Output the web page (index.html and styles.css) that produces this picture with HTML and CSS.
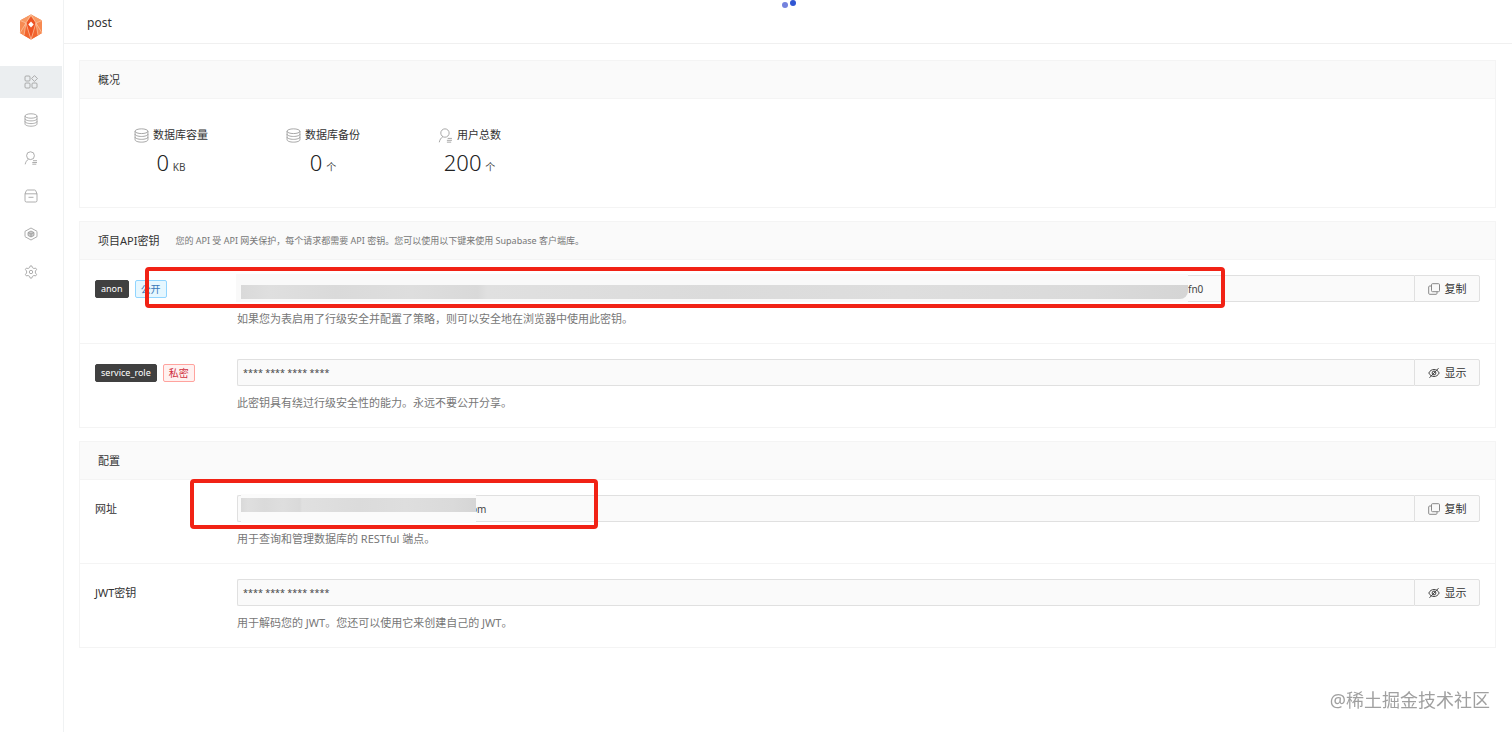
FILE: index.html
```html
<!DOCTYPE html>
<html lang="zh-CN">
<head>
  <meta charset="UTF-8"/>
  <meta name="viewport" content="width=device-width, initial-scale=1.0"/>
  <title>post</title>
  <link rel="stylesheet" href="styles.css">
</head>
<body>

  <!-- Shared icons -->
  <svg class="sprite" aria-hidden="true">
    <symbol id="icon-db" viewBox="0 0 14 14">
      <ellipse cx="7" cy="3" rx="6" ry="2.2"/>
      <path d="M1 3v8c0 1.2 2.700 2.200 6 2.200s6-1 6-2.200V3M1 5.700c0 1.200 2.700 2.200 6 2.200s6-1 6-2.200M1 8.400c0 1.200 2.700 2.200 6 2.200s6-1 6-2.200"/>
    </symbol>
    <symbol id="icon-user" viewBox="0 0 14 14">
      <circle cx="6.500" cy="4.700" r="3.900"/>
      <path d="M4.500 8.200C2.800 9.200 1.600 11 1.200 13.300M9 9.700h4M8.300 11.500h4.700M8.300 13.200h4"/>
    </symbol>
    <symbol id="icon-copy" viewBox="0 0 12 12">
      <rect x="3.500" y="0.700" width="8" height="8" rx="1"/>
      <path d="M3.500 3H1.700Q0.700 3 0.700 4v6.300q0 1 1 1H8q1 0 1-1V8.700"/>
    </symbol>
    <symbol id="icon-hide" viewBox="0 0 12 12">
      <path d="M0.800 6C2 3.600 3.800 2.500 6 2.500S10 3.600 11.200 6C10 8.400 8.200 9.500 6 9.500S2 8.400 0.800 6zM10.500 1.200L1.500 10.800"/>
      <circle cx="6" cy="6" r="1.900"/>
    </symbol>
  </svg>

  <div class="layout">

    <!-- Sidebar -->
    <aside class="sidebar">
      <a class="logo" href="#" aria-label="首页">
        <svg viewBox="0 0 24 26" width="24" height="26">
          <path fill="#f47b45" d="M12 0.500L23 6.500V19L12 25.500 1 19V6.500z"/>
          <path fill="#f79a64" d="M12 0.500L23 6.500 17 9 12 3.500 7 9 1 6.500z"/>
          <path fill="#f78a52" d="M1 6.500L7 9 5 21.400 1 19zM23 6.500L17 9l2 12.400L23 19z"/>
          <path fill="#f2662f" d="M7 9l5 16.500L5 21.400zM17 9l-5 16.500 7-4.100z"/>
          <path fill="#ee5424" d="M12 2.500L17 9l-5 16.500L7 9z"/>
          <path fill="none" stroke="#fcc9a8" stroke-width="0.700" d="M1 6.500L7 9l5-8.500L17 9l6-2.500M7 9L1 19M7 9l5 16.500L17 9l6 10M7 9L5 21.400M17 9l2 12.400"/>
          <path fill="#fff" d="M12 7.400l2.700 3-2.700 3.200-2.700-3.200z"/>
        </svg>
      </a>
      <nav class="menu">
        <a class="menu-item active" href="#" aria-label="概况">
          <svg class="icon" viewBox="0 0 14 14">
            <rect x="1" y="1" width="5" height="5" rx="1"/>
            <path d="M10.500 0.600L13.400 3.500 10.500 6.400 7.600 3.500z"/>
            <rect x="1" y="8" width="5" height="5" rx="1"/>
            <rect x="8" y="8" width="5" height="5" rx="1"/>
          </svg>
        </a>
        <a class="menu-item" href="#" aria-label="数据库">
          <svg class="icon"><use href="#icon-db"/></svg>
        </a>
        <a class="menu-item" href="#" aria-label="用户">
          <svg class="icon"><use href="#icon-user"/></svg>
        </a>
        <a class="menu-item" href="#" aria-label="存储">
          <svg class="icon" viewBox="0 0 14 14">
            <path d="M1 4.800L2.300 1.700Q2.600 1 3.400 1h7.200q0.800 0 1.100 0.700L13 4.800V11.500q0 1.500-1.500 1.500h-9Q1 13 1 11.500zM1 4.800h12M4.500 8.300h5"/>
          </svg>
        </a>
        <a class="menu-item" href="#" aria-label="云函数">
          <svg class="icon" viewBox="0 0 14 14">
            <path d="M1 9.500V4.300L7 1l6 3.300M13 4.500v5.200L7 13 1 9.700"/>
            <path class="shade" d="M7 4L10 5.500v3L7 10 4 8.500v-3z"/>
            <path d="M7 7v3M4 5.500L7 7l3-1.500"/>
          </svg>
        </a>
        <a class="menu-item" href="#" aria-label="设置">
          <svg class="icon" viewBox="0 0 14 14">
            <path d="M5.600 2.600L6.200 0.900h1.600L8.400 2.600 9.900 3.500 11.700 3.100 12.600 4.600 11.400 6v2L12.600 9.400 11.700 10.900 9.900 10.500 8.400 11.400 7.800 13.100H6.200L5.600 11.400 4.100 10.500 2.300 10.900 1.400 9.400 2.600 8V6L1.400 4.600 2.300 3.100 4.100 3.500z"/>
            <circle cx="7" cy="7" r="1.700"/>
          </svg>
        </a>
      </nav>
    </aside>

    <div class="page">
      <header class="header">post</header>
      <div class="loader"><i class="dot light"></i><i class="dot"></i></div>

      <main class="content">

        <!-- Overview -->
        <section class="card">
          <div class="card-header"><h2 class="card-title">概况</h2></div>
          <div class="stats">
            <div class="stat">
              <div class="stat-label"><svg class="icon"><use href="#icon-db"/></svg>数据库容量</div>
              <div class="stat-value">0 <small>KB</small></div>
            </div>
            <div class="stat">
              <div class="stat-label"><svg class="icon"><use href="#icon-db"/></svg>数据库备份</div>
              <div class="stat-value">0 <small>个</small></div>
            </div>
            <div class="stat">
              <div class="stat-label"><svg class="icon"><use href="#icon-user"/></svg>用户总数</div>
              <div class="stat-value">200 <small>个</small></div>
            </div>
          </div>
        </section>

        <!-- API keys -->
        <section class="card">
          <div class="card-header">
            <h2 class="card-title">项目API密钥</h2>
            <span class="card-note">您的 API 受 API 网关保护，每个请求都需要 API 密钥。您可以使用以下键来使用 Supabase 客户端库。</span>
          </div>
          <div class="row">
            <label class="row-label" for="anon"><span class="tag dark">anon</span><span class="tag blue">公开</span></label>
            <div class="row-main">
              <div class="field">
                <input class="field-input key-tail" id="anon" type="text" value="fn0" readonly>
                <button class="field-btn" type="button"><svg class="btn-icon soft"><use href="#icon-copy"/></svg>复制</button>
                <div class="mask mask-key"></div>
              </div>
              <div class="hint">如果您为表启用了行级安全并配置了策略，则可以安全地在浏览器中使用此密钥。</div>
            </div>
            <div class="marker marker-key"></div>
          </div>
          <div class="row">
            <label class="row-label" for="service"><span class="tag dark">service_role</span><span class="tag red">私密</span></label>
            <div class="row-main">
              <div class="field">
                <input class="field-input secret" id="service" type="text" value="**** **** **** ****" readonly>
                <button class="field-btn" type="button"><svg class="btn-icon"><use href="#icon-hide"/></svg>显示</button>
              </div>
              <div class="hint">此密钥具有绕过行级安全性的能力。永远不要公开分享。</div>
            </div>
          </div>
        </section>

        <!-- Config -->
        <section class="card">
          <div class="card-header"><h2 class="card-title">配置</h2></div>
          <div class="row">
            <label class="row-label" for="url">网址</label>
            <div class="row-main">
              <div class="field">
                <input class="field-input url-tail" id="url" type="text" value="om" readonly>
                <button class="field-btn" type="button"><svg class="btn-icon soft"><use href="#icon-copy"/></svg>复制</button>
                <div class="mask mask-url"></div>
              </div>
              <div class="hint">用于查询和管理数据库的 RESTful 端点。</div>
            </div>
            <div class="marker marker-url"></div>
          </div>
          <div class="row">
            <label class="row-label" for="jwt">JWT密钥</label>
            <div class="row-main">
              <div class="field">
                <input class="field-input secret" id="jwt" type="text" value="**** **** **** ****" readonly>
                <button class="field-btn" type="button"><svg class="btn-icon"><use href="#icon-hide"/></svg>显示</button>
              </div>
              <div class="hint">用于解码您的 JWT。您还可以使用它来创建自己的 JWT。</div>
            </div>
          </div>
        </section>

      </main>
    </div>
  </div>

  <div class="watermark">@稀土掘金技术社区</div>

</body>
</html>
```

FILE: styles.css
```css
* { box-sizing: border-box; }
body {
  margin: 0;
  background: #fff;
  color: #333;
  font-family: "Noto Sans", "Noto Sans CJK SC", sans-serif;
  font-size: 11px;
  line-height: 16px;
}
.sprite { display: none; }
.icon {
  width: 14px;
  height: 14px;
  fill: none;
  stroke: #999;
  stroke-width: 0.8;
}
.icon .shade { fill: #ccc; }

.layout { display: flex; min-height: 100vh; }

/* Sidebar */
.sidebar {
  flex: none;
  width: 64px;
  border-right: 1px solid #f0f2f3;
}
.logo {
  display: flex;
  justify-content: center;
  padding: 14px 1px 26px 0;
}
.menu { display: flex; flex-direction: column; gap: 6px; }
.menu-item {
  display: flex;
  align-items: center;
  justify-content: center;
  height: 32px;
  margin-right: 1px;
}
.menu-item.active { background: #ebeef0; }

.page { flex: 1; min-width: 0; }
.header {
  height: 44px;
  padding: 15px 23px 12px;
  border-bottom: 1px solid #f0f0f0;
  font-size: 12px;
}
.loader {
  position: absolute;
  top: 0;
  left: 52%;
  display: flex;
  gap: 2px;
  margin-left: -4px;
}
.dot {
  width: 6px;
  height: 6px;
  border-radius: 50%;
  background: #3056d3;
}
.dot.light { background: #7482dd; margin-top: 2px; }

/* Cards */
.content {
  display: flex;
  flex-direction: column;
  gap: 13px;
  padding: 16px 16px 16px 15px;
}
.card { border: 1px solid #f4f4f4; }
.card-header {
  display: flex;
  align-items: center;
  gap: 16px;
  height: 37px;
  padding: 0 18px;
  background: #fafafa;
}
.card-title { margin: 0; font-size: 11px; font-weight: normal; }
.card-note { font-size: 9px; color: #777; }

.stats {
  display: flex;
  gap: 78px;
  padding: 28px 54px 24px;
  border-top: 1px solid #f4f4f4;
}
.stat { text-align: center; }
.stat-label { display: flex; align-items: center; gap: 4px; }
.stat-label .icon { width: 15px; height: 15px; }
.stat-value { font-size: 22px; font-weight: 300; line-height: 32px; margin-top: 3px; color: #222; }
.stat-value small { font-size: 10px; font-weight: normal; margin-left: -2px; color: #444; }

/* Setting rows */
.row {
  position: relative;
  display: flex;
  padding: 15px 15px 16px;
  border-top: 1px solid #f4f4f4;
}
.row-label {
  flex: none;
  display: flex;
  align-items: center;
  gap: 6px;
  width: 142px;
  height: 27px;
}
.row-main { flex: 1; min-width: 0; }
.tag {
  height: 18px;
  padding: 0 5px;
  border: 1px solid;
  border-radius: 2px;
  font-size: 10px;
  line-height: 16px;
}
.tag.dark { background: #404040; border-color: #404040; color: #fff; font-size: 9px; }
.tag.blue { background: #e6f7ff; border-color: #91d5ff; color: #3a78b8; }
.tag.red { background: #fff1f0; border-color: #ffa39e; color: #cf3040; }

.field { position: relative; display: flex; height: 27px; }
.field-input {
  flex: 1;
  min-width: 0;
  padding: 0 5px;
  border: 1px solid #e0e0e0;
  border-right: 0;
  border-radius: 2px 0 0 2px;
  background: #fafafa;
  color: #444;
  font: inherit;
  outline: none;
}
.field-input.secret { font-size: 9px; }
.field-input.key-tail { padding-left: 950px; font-size: 10px; }
.field-input.url-tail { padding-left: 233px; font-size: 10px; }
.field-btn {
  display: flex;
  align-items: center;
  justify-content: center;
  gap: 5px;
  width: 66px;
  padding: 0;
  border: 1px solid #e0e0e0;
  border-radius: 0 2px 2px 0;
  background: #fafafa;
  color: #333;
  font: inherit;
}
.btn-icon {
  width: 12px;
  height: 12px;
  fill: none;
  stroke: #444;
  stroke-width: 1;
}
.btn-icon.soft { stroke: #888; }
.hint { margin-top: 9px; color: #777; }

/* Hidden values */
.mask { position: absolute; }
.mask::after {
  content: "";
  position: absolute;
  inset: 11px 0 3px 5px;
  background: linear-gradient(90deg, #d9d9d9, #dfdfdf 3%, #dadada 10%, #dedede 18%, #d9d9d9 25%, #e0e0e0 26%, #dbdbdb 50%, #dedede 70%, #dadada 90%, #d5d5d5);
}
.mask-key { top: -1px; left: -1px; width: 952px; height: 28px; background: #f9f9f9; }
.mask-key::after { border-bottom-right-radius: 8px; }
.mask-url { top: -1px; left: 4px; width: 235px; height: 29px; background: #fbfbfb; }
.mask-url::after { inset: 4px 0 11px 0; }

.marker {
  position: absolute;
  border: 4px solid #f12215;
  border-radius: 4px;
}
.marker-key { top: 7px; left: 65px; width: 1080px; height: 41px; }
.marker-url { top: -1px; left: 110px; width: 408px; height: 50px; }

.watermark {
  position: fixed;
  right: 22px;
  bottom: 19px;
  font-size: 18px;
  line-height: 26px;
  color: #a0a0a0;
}
```
